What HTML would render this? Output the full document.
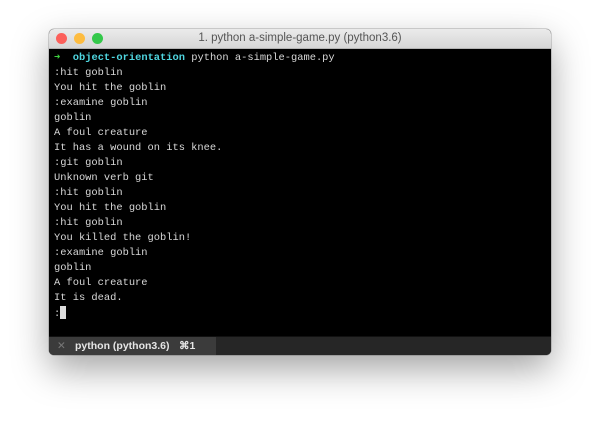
<!DOCTYPE html>
<html><head><meta charset="utf-8"><style>
html,body{margin:0;padding:0;background:#fff;width:600px;height:426px;overflow:hidden}
.win{position:absolute;left:49px;top:29px;width:502px;height:326px;border-radius:5px;overflow:hidden;background:#000;box-shadow:0 14px 36px rgba(0,0,0,0.36),0 0 0 0.5px rgba(0,0,0,0.3)}
.title{position:absolute;left:0;top:0;width:502px;height:19px;background:linear-gradient(#ebebeb,#d6d6d6);border-bottom:1px solid #b4b4b4;font:11.5px "Liberation Sans",sans-serif;color:#555;text-align:center;line-height:19px}
.dot{position:absolute;top:4px;width:11px;height:11px;border-radius:50%}
.term{position:absolute;left:5px;top:22px;font:10.4px/15px "Liberation Mono",monospace;color:#d8d8d8;white-space:pre}
.cur{display:inline-block;width:6px;height:13px;background:#ddd;vertical-align:-3px}
.tabs{position:absolute;left:0;top:307px;width:502px;height:19px;background:#262626;border-top:1px solid #111}
.tab{position:absolute;left:0;top:0;width:167px;height:19px;background:#3b3b3b;font:bold 10.5px "Liberation Sans",sans-serif;color:#e6e6e6;line-height:19px}
</style></head><body>
<div class="win">
<div class="title">
<div class="dot" style="left:7px;background:#fc605b"></div>
<div class="dot" style="left:25px;background:#fdbc40"></div>
<div class="dot" style="left:43px;background:#34c84a"></div>
1. python a-simple-game.py (python3.6)</div>
<div class="term"><span style="color:#3fd13f;font-weight:bold">➜</span>  <span style="color:#4fd6e0;font-weight:bold">object-orientation</span> python a-simple-game.py
:hit goblin
You hit the goblin
:examine goblin
goblin
A foul creature
It has a wound on its knee.
:git goblin
Unknown verb git
:hit goblin
You hit the goblin
:hit goblin
You killed the goblin!
:examine goblin
goblin
A foul creature
It is dead.
:<span class="cur"></span></div>
<div class="tabs"><div class="tab"><span style="position:absolute;left:8px;color:#777;font-weight:normal">✕</span><span style="position:absolute;left:26px">python (python3.6)</span><span style="position:absolute;left:130px">⌘1</span></div></div>
</div>
</body></html>
